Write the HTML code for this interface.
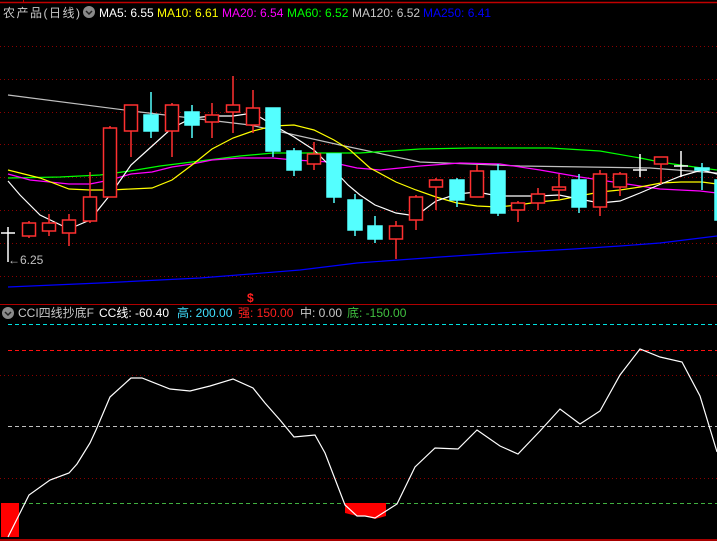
<!DOCTYPE html>
<html><head><meta charset="utf-8"><style>
html,body{margin:0;padding:0;background:#000;width:717px;height:541px;overflow:hidden}
svg{display:block}
text{font-family:"Liberation Sans","Noto Sans CJK SC",sans-serif;font-size:12px}
</style></head><body>
<svg width="717" height="541" viewBox="0 0 717 541" xmlns="http://www.w3.org/2000/svg">
<rect width="717" height="541" fill="#000"/>
<line x1="0" y1="2.5" x2="717" y2="2.5" stroke="#c00000" stroke-width="1.5"/>
<line x1="23.5" y1="0" x2="23.5" y2="3" stroke="#c00000"/>
<g stroke="#8b0000" stroke-dasharray="1,3">
<line x1="0" y1="46.5" x2="717" y2="46.5"/>
<line x1="0" y1="79.5" x2="717" y2="79.5"/>
<line x1="0" y1="112.5" x2="717" y2="112.5"/>
<line x1="0" y1="144.5" x2="717" y2="144.5"/>
<line x1="0" y1="177.5" x2="717" y2="177.5"/>
<line x1="0" y1="210.5" x2="717" y2="210.5"/>
<line x1="0" y1="243.5" x2="717" y2="243.5"/>
<line x1="0" y1="276.5" x2="717" y2="276.5"/>
</g>
<text x="3" y="17" fill="#c8c8c8" font-size="13" letter-spacing="1.5">农产品(日线)</text>
<circle cx="89" cy="12" r="6" fill="#8a8a8a"/>
<path d="M86 11 L89 14 L92 11" stroke="#222" stroke-width="1.5" fill="none"/>
<text x="99" y="17" fill="#fff">MA5: 6.55</text>
<text x="157" y="17" fill="#ffff00">MA10: 6.61</text>
<text x="222" y="17" fill="#ff00ff">MA20: 6.54</text>
<text x="287" y="17" fill="#00ff00">MA60: 6.52</text>
<text x="352" y="17" fill="#c8c8c8">MA120: 6.52</text>
<text x="423" y="17" fill="#0000ff">MA250: 6.41</text>
<g fill="none" stroke-width="1.2">
<polyline stroke="#0000ff" points="8,287 100,283 200,278 300,270 357,263 440,257 500,253 574,249 620,246 660,243 717,236"/>
<polyline stroke="#c0c0c0" points="8,95 140,112 250,125 340,145 420,162 520,166 650,168 717,173"/>
<polyline stroke="#00ff00" points="8,178 60,177 100,175 130,171 160,166 192,162 240,156 273,153 330,153 360,153 420,149 470,148 550,148 600,151 640,158 660,162 680,165 717,170"/>
<polyline stroke="#ff00ff" points="8,174 30,180 69,184 90,184 110,180 131,174 152,172 172,167 192,164 212,160 240,158 273,158 294,160 330,162 357,168 380,170 420,166 460,163 500,164 540,170 580,177 620,183 660,189 700,191 717,193"/>
<polyline stroke="#ffff00" points="8,170 40,178 69,189 90,190 110,190 131,189 152,188 172,180 192,165 212,149 233,138 253,131 273,126 294,125 314,130 334,140 350,150 370,168 396,182 416,190 436,197 457,203 477,206 498,207 518,205 538,202 559,200 579,196 600,192 620,190 640,187 661,183 681,182 702,182 717,184"/>
<polyline stroke="#ffffff" points="8,181 20,195 40,215 69,229 90,220 110,195 131,165 151,147 172,128 192,118 212,116 233,116 253,113 273,125 294,137 314,150 334,170 348,185 360,195 375,205 396,213 416,216 436,201 457,194 477,192 498,196 518,196 538,196 559,195 579,199 600,203 620,201 640,193 661,184 681,176 702,170 717,174"/>
</g>
<g stroke="#ff3030" stroke-width="1.5" fill="#000">
<line x1="29" y1="221" x2="29" y2="238"/><rect x="22.5" y="223" width="13" height="13"/>
<line x1="49" y1="214" x2="49" y2="236"/><rect x="42.5" y="223" width="13" height="8"/>
<line x1="69" y1="214" x2="69" y2="246"/><rect x="62.5" y="220" width="13" height="13"/>
<line x1="90" y1="172" x2="90" y2="223"/><rect x="83.5" y="197" width="13" height="24"/>
<line x1="110" y1="126" x2="110" y2="197"/><rect x="103.5" y="128" width="13" height="69"/>
<line x1="131" y1="105" x2="131" y2="157"/><rect x="124.5" y="105" width="13" height="26"/>
<line x1="172" y1="103" x2="172" y2="157"/><rect x="165.5" y="105" width="13" height="26"/>
<line x1="212" y1="103" x2="212" y2="138"/><rect x="205.5" y="115" width="13" height="7"/>
<line x1="233" y1="76" x2="233" y2="133"/><rect x="226.5" y="105" width="13" height="7"/>
<line x1="253" y1="90" x2="253" y2="133"/><rect x="246.5" y="108" width="13" height="17"/>
<line x1="314" y1="142" x2="314" y2="170"/><rect x="307.5" y="154" width="13" height="10"/>
<line x1="396" y1="221" x2="396" y2="259"/><rect x="389.5" y="226" width="13" height="13"/>
<line x1="416" y1="195" x2="416" y2="230"/><rect x="409.5" y="197" width="13" height="23"/>
<line x1="436" y1="178" x2="436" y2="210"/><rect x="429.5" y="180" width="13" height="7"/>
<line x1="477" y1="165" x2="477" y2="197"/><rect x="470.5" y="171" width="13" height="26"/>
<line x1="518" y1="201" x2="518" y2="222"/><rect x="511.5" y="203" width="13" height="7"/>
<line x1="538" y1="188" x2="538" y2="210"/><rect x="531.5" y="194" width="13" height="9"/>
<line x1="559" y1="174" x2="559" y2="200"/><rect x="552.5" y="187" width="13" height="3"/>
<line x1="600" y1="170" x2="600" y2="216"/><rect x="593.5" y="174" width="13" height="33"/>
<line x1="620" y1="172" x2="620" y2="196"/><rect x="613.5" y="174" width="13" height="13"/>
<line x1="661" y1="157" x2="661" y2="184"/><rect x="654.5" y="157" width="13" height="7"/>
</g>
<g stroke="#54ffff" stroke-width="1.5" fill="#54ffff">
<line x1="151" y1="92" x2="151" y2="138"/><rect x="144" y="115" width="14" height="16"/>
<line x1="192" y1="105" x2="192" y2="138"/><rect x="185" y="112" width="14" height="13"/>
<line x1="273" y1="108" x2="273" y2="157"/><rect x="266" y="108" width="14" height="43"/>
<line x1="294" y1="148" x2="294" y2="176"/><rect x="287" y="151" width="14" height="19"/>
<line x1="334" y1="154" x2="334" y2="203"/><rect x="327" y="154" width="14" height="43"/>
<line x1="355" y1="194" x2="355" y2="236"/><rect x="348" y="200" width="14" height="30"/>
<line x1="375" y1="216" x2="375" y2="243"/><rect x="368" y="226" width="14" height="13"/>
<line x1="457" y1="178" x2="457" y2="207"/><rect x="450" y="180" width="14" height="20"/>
<line x1="498" y1="164" x2="498" y2="216"/><rect x="491" y="171" width="14" height="42"/>
<line x1="579" y1="174" x2="579" y2="213"/><rect x="572" y="180" width="14" height="27"/>
<line x1="702" y1="163" x2="702" y2="190"/><rect x="695" y="168" width="14" height="2"/>
<rect x="715" y="180" width="3" height="40"/>
</g>
<g stroke="#fff" stroke-width="1.5">
<line x1="640" y1="154" x2="640" y2="177"/><line x1="633" y1="170" x2="647" y2="170"/>
<line x1="681" y1="151" x2="681" y2="177"/><line x1="674" y1="166" x2="688" y2="166"/>
<line x1="8" y1="227" x2="8" y2="262"/><line x1="1" y1="233" x2="15" y2="233"/>
</g>
<text x="8" y="264" fill="#c0c0c0" font-size="12">←6.25</text>
<line x1="0" y1="304.5" x2="717" y2="304.5" stroke="#b00000"/>
<text x="247" y="302" fill="#ff2020" font-size="11" font-weight="bold">$</text>
<circle cx="8" cy="313" r="6" fill="#8a8a8a"/>
<path d="M5 312 L8 315 L11 312" stroke="#222" stroke-width="1.5" fill="none"/>
<text x="18" y="317" fill="#c8c8c8">CCI四线抄底F</text>
<text x="99" y="317" fill="#fff">CC线: -60.40</text>
<text x="177" y="317" fill="#40e0ff">高: 200.00</text>
<text x="238" y="317" fill="#ff2020">强: 150.00</text>
<text x="300" y="317" fill="#c8c8c8">中: 0.00</text>
<text x="347" y="317" fill="#40c040">底: -150.00</text>
<line x1="8" y1="324.5" x2="717" y2="324.5" stroke="#00e0e0" stroke-dasharray="4,3"/>
<line x1="8" y1="350.5" x2="717" y2="350.5" stroke="#ff1010" stroke-dasharray="4,3"/>
<line x1="0" y1="375.5" x2="717" y2="375.5" stroke="#8b0000" stroke-dasharray="1,3"/>
<line x1="8" y1="426.5" x2="717" y2="426.5" stroke="#c0c0c0" stroke-dasharray="4,3"/>
<line x1="0" y1="478.5" x2="717" y2="478.5" stroke="#8b0000" stroke-dasharray="1,3"/>
<line x1="8" y1="503.5" x2="717" y2="503.5" stroke="#40b040" stroke-dasharray="4,3"/>
<rect x="1" y="503" width="18" height="34" fill="#ff0000"/>
<polygon points="345,503 386,503 386,516 375,519 365,516 357,516 345,513" fill="#ff0000"/>
<polyline fill="none" stroke="#fff" stroke-width="1.2" points="8,537 29,495 50,480 69,473 77,464 90,443 96,430 110,397 131,378 142,378 170,389 190,391 210,386 233,379 253,388 265,403 280,420 294,437 315,435 325,453 345,505 357,516 365,516 375,518 397,504 415,467 435,448 458,449 477,430 500,446 518,454 540,431 560,409 580,424 600,411 620,375 640,349 660,357 682,362 700,396 717,452"/>
<line x1="0" y1="540" x2="717" y2="540" stroke="#e00000" stroke-width="1.5"/>
</svg>
</body></html>
